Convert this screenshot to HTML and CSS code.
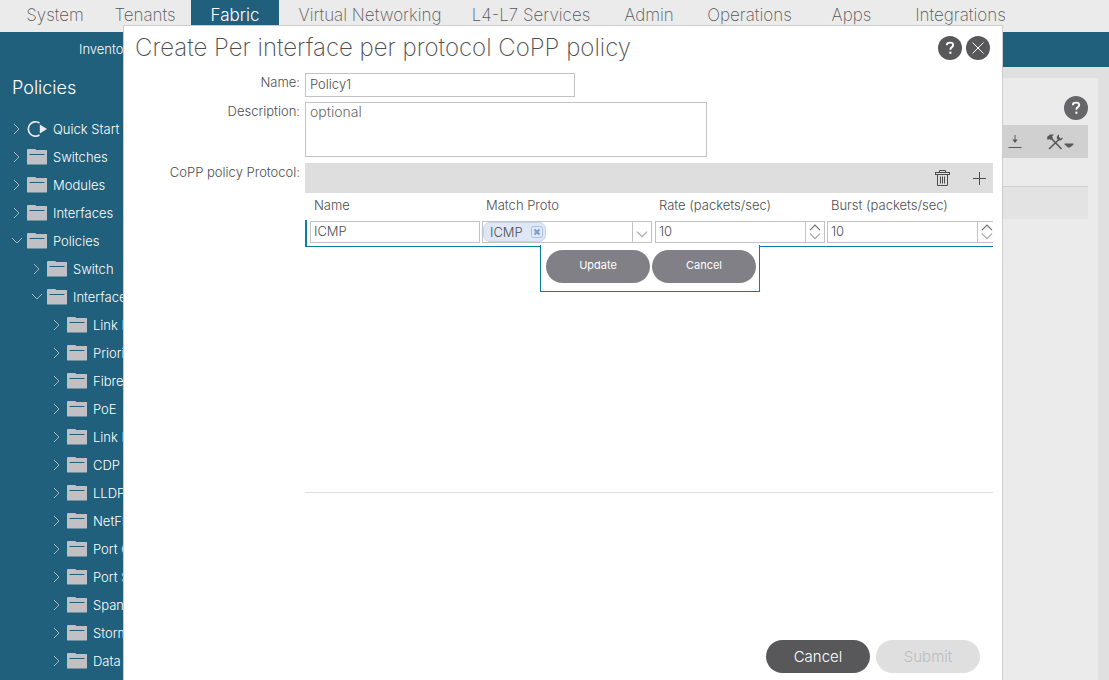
FILE: index.html
```html
<!DOCTYPE html>
<html lang="en">
<head>
    <meta charset="UTF-8">
    <meta name="viewport" content="width=device-width, initial-scale=1.0">
    <title>Create Per interface per protocol CoPP policy</title>
    <link rel="stylesheet" href="styles.css">
</head>
<body>
    <svg width="0" height="0" class="sprite" aria-hidden="true">
        <symbol id="right" viewBox="0 0 10 12"><path d="M2 1l5 5-5 5" fill="none" stroke="#a3b5be" stroke-width="1"/></symbol>
        <symbol id="down" viewBox="0 0 12 12"><path d="M1 3l5 5 5-5" fill="none" stroke="#a3b5be" stroke-width="1"/></symbol>
        <symbol id="folder" viewBox="0 0 20 16"><path d="M0 1q0-1 1-1h7q1 0 1 1h11v14q0 .6-.6.6H.6Q0 15.600 0 15z" fill="#c1c1c5"/><path d="M3 5.500h14" stroke="#21607c" stroke-width="1.200" stroke-linecap="round"/></symbol>
        <symbol id="start" viewBox="0 0 20 16"><path d="M12.500 2A7.200 7.200 0 1 0 12.500 14" fill="none" stroke="#ececec" stroke-width="1.600"/><path d="M12.800 3.500v9L20 8z" fill="#ececec"/></symbol>
        <symbol id="help" viewBox="0 0 24 24"><circle cx="12" cy="12" r="12" fill="#58585b"/><path d="M9 9.300V8.200Q9.200 6.600 12.200 6.600 15.200 6.600 15.200 9q0 1.500-1.600 2.400-1.200.7-1.200 2.300" fill="none" stroke="#fff" stroke-width="1.900"/><path d="M11.400 15.600h2v2.200h-2z" fill="#fff"/></symbol>
        <symbol id="close" viewBox="0 0 24 24"><circle cx="12" cy="12" r="12" fill="#58585b"/><path d="M6.500 6.500l11 11M17.500 6.500l-11 11" stroke="#fff" stroke-width="1"/></symbol>
        <symbol id="v" viewBox="0 0 12 7"><path d="M1 .7l5 5 5-5" fill="none" stroke="currentColor" stroke-width="1.200"/></symbol>
        <symbol id="up" viewBox="0 0 12 7"><path d="M1 6.200l5-5 5 5" fill="none" stroke="currentColor" stroke-width="1.200"/></symbol>
    </svg>

    <nav class="topnav">
        <a href="#">System</a>
        <a href="#">Tenants</a>
        <a href="#" class="active">Fabric</a>
        <a href="#">Virtual Networking</a>
        <a href="#">L4-L7 Services</a>
        <a href="#">Admin</a>
        <a href="#">Operations</a>
        <a href="#">Apps</a>
        <a href="#">Integrations</a>
    </nav>
    <div class="subnav"><a href="#">Inventory</a></div>

    <div class="main">
        <aside class="sidebar">
            <h2>Policies</h2>
            <ul class="tree">
                <li><svg class="arrow"><use href="#right"/></svg><svg class="icon"><use href="#start"/></svg><a href="#">Quick Start</a></li>
                <li><svg class="arrow"><use href="#right"/></svg><svg class="icon"><use href="#folder"/></svg><a href="#">Switches</a></li>
                <li><svg class="arrow"><use href="#right"/></svg><svg class="icon"><use href="#folder"/></svg><a href="#">Modules</a></li>
                <li><svg class="arrow"><use href="#right"/></svg><svg class="icon"><use href="#folder"/></svg><a href="#">Interfaces</a></li>
                <li><svg class="arrow"><use href="#down"/></svg><svg class="icon"><use href="#folder"/></svg><a href="#">Policies</a></li>
                <li class="level-2"><svg class="arrow"><use href="#right"/></svg><svg class="icon"><use href="#folder"/></svg><a href="#">Switch</a></li>
                <li class="level-2"><svg class="arrow"><use href="#down"/></svg><svg class="icon"><use href="#folder"/></svg><a href="#">Interface</a></li>
                <li class="level-3"><svg class="arrow"><use href="#right"/></svg><svg class="icon"><use href="#folder"/></svg><a href="#">Link Level</a></li>
                <li class="level-3"><svg class="arrow"><use href="#right"/></svg><svg class="icon"><use href="#folder"/></svg><a href="#">Priority Flow Control</a></li>
                <li class="level-3"><svg class="arrow"><use href="#right"/></svg><svg class="icon"><use href="#folder"/></svg><a href="#">Fibre Channel Interface</a></li>
                <li class="level-3"><svg class="arrow"><use href="#right"/></svg><svg class="icon"><use href="#folder"/></svg><a href="#">PoE</a></li>
                <li class="level-3"><svg class="arrow"><use href="#right"/></svg><svg class="icon"><use href="#folder"/></svg><a href="#">Link Flap</a></li>
                <li class="level-3"><svg class="arrow"><use href="#right"/></svg><svg class="icon"><use href="#folder"/></svg><a href="#">CDP Interface</a></li>
                <li class="level-3"><svg class="arrow"><use href="#right"/></svg><svg class="icon"><use href="#folder"/></svg><a href="#">LLDP Interface</a></li>
                <li class="level-3"><svg class="arrow"><use href="#right"/></svg><svg class="icon"><use href="#folder"/></svg><a href="#">NetFlow</a></li>
                <li class="level-3"><svg class="arrow"><use href="#right"/></svg><svg class="icon"><use href="#folder"/></svg><a href="#">Port Channel</a></li>
                <li class="level-3"><svg class="arrow"><use href="#right"/></svg><svg class="icon"><use href="#folder"/></svg><a href="#">Port Security</a></li>
                <li class="level-3"><svg class="arrow"><use href="#right"/></svg><svg class="icon"><use href="#folder"/></svg><a href="#">Spanning Tree</a></li>
                <li class="level-3"><svg class="arrow"><use href="#right"/></svg><svg class="icon"><use href="#folder"/></svg><a href="#">Storm Control</a></li>
                <li class="level-3"><svg class="arrow"><use href="#right"/></svg><svg class="icon"><use href="#folder"/></svg><a href="#">Data Plane</a></li>
            </ul>
        </aside>
        <section class="workspace">
            <div class="panel">
                <div class="panel-head"><button class="round page-help" aria-label="Help"><svg><use href="#help"/></svg></button></div>
                <div class="panel-tools">
                    <button aria-label="Download"><svg width="14" height="16" viewBox="0 0 14 16"><path d="M7 1v7M.5 13.500h13" stroke="#58585b"/><path d="M4.300 5.500h5.400L7 9z" fill="#58585b"/></svg></button>
                    <button aria-label="Tools"><svg width="28" height="18" viewBox="0 0 28 18"><path d="M5 5l10.500 11M14 5.500L3 16" stroke="#58585b" stroke-width="1.600"/><path d="M1 4l3-2.500h4L6 3.500l1 1.500-2.500 2-1-1L1.500 7z" fill="#58585b"/><path d="M13 1.500Q10 3 11 6l2 1.500q3 .5 4-3l-2.500 1-1.500-1.500z" fill="#58585b"/><path d="M18.500 10.500h9v1L24 14.500h-2l-3.500-3z" fill="#58585b"/></svg></button>
                </div>
                <div class="panel-row"></div>
            </div>
        </section>
    </div>

    <div class="dialog" role="dialog" aria-labelledby="dialog-title">
        <div class="dialog-head">
            <h1 id="dialog-title">Create Per interface per protocol CoPP policy</h1>
            <button class="round" aria-label="Help"><svg><use href="#help"/></svg></button>
            <button class="round" aria-label="Close"><svg><use href="#close"/></svg></button>
        </div>

        <form class="form">
            <label for="name">Name:</label>
            <input type="text" id="name" class="name-field" value="Policy1">
            <label for="description">Description:</label>
            <textarea id="description" placeholder="optional"></textarea>
            <span class="label">CoPP policy Protocol:</span>
            <div class="protocols">
                <div class="grid-tools">
                    <button type="button" aria-label="Delete"><svg width="15" height="16" viewBox="0 0 15 16"><path d="M0 2.500h15M0 4.500h15M.5 2v3M14.500 2v3M4.500 2V.5h6V2M2.500 4.500v11h10v-11M5.500 6.500v7M7.500 6.500v7M9.500 6.500v7" fill="none" stroke="#4d4d50"/></svg></button>
                    <button type="button" aria-label="Add"><svg width="13" height="13" viewBox="0 0 13 13"><path d="M6.500 0v13M0 6.500h13" stroke="#4d4d50"/></svg></button>
                </div>
                <table>
                    <thead>
                        <tr><th>Name</th><th class="match">Match Proto</th><th>Rate (packets/sec)</th><th>Burst (packets/sec)</th></tr>
                    </thead>
                    <tbody>
                        <tr>
                            <td><div class="cell"><input type="text" aria-label="Name" value="ICMP"></div></td>
                            <td>
                                <div class="cell">
                                    <span class="tag">ICMP<button type="button" aria-label="Remove ICMP"><svg width="12" height="12" viewBox="0 0 12 12"><rect x=".5" y=".5" width="11" height="11" rx="2" fill="#dfe8f6" stroke="#a9c3e6"/><path d="M3.500 3.500l5 5M8.500 3.500l-5 5" stroke="#7a9ccb" stroke-width="2"/></svg></button></span>
                                    <input type="text" aria-label="Match Proto">
                                    <button type="button" class="trigger" aria-label="Open list"><svg><use href="#v"/></svg></button>
                                </div>
                            </td>
                            <td>
                                <div class="cell">
                                    <input type="text" aria-label="Rate" value="10">
                                    <span class="spinner"><button type="button" aria-label="Increase rate"><svg><use href="#up"/></svg></button><button type="button" aria-label="Decrease rate"><svg><use href="#v"/></svg></button></span>
                                </div>
                            </td>
                            <td>
                                <div class="cell">
                                    <input type="text" aria-label="Burst" value="10">
                                    <span class="spinner"><button type="button" aria-label="Increase burst"><svg><use href="#up"/></svg></button><button type="button" aria-label="Decrease burst"><svg><use href="#v"/></svg></button></span>
                                </div>
                            </td>
                        </tr>
                    </tbody>
                </table>
                <div class="row-actions">
                    <button type="button">Update</button>
                    <button type="button">Cancel</button>
                </div>
            </div>
        </form>

        <div class="dialog-foot">
            <button type="button" class="cancel">Cancel</button>
            <button type="button" class="submit" disabled>Submit</button>
        </div>
    </div>
</body>
</html>
```

FILE: styles.css
```css
* {
    box-sizing: border-box;
}
body {
    margin: 0;
    height: 100vh;
    display: flex;
    flex-direction: column;
    overflow: hidden;
    font-family: Inter, "Liberation Sans", sans-serif;
    font-size: 13px;
    font-weight: 300;
    color: #4d4d50;
    background: #e0e0e0;
}
h1, h2, ul {
    margin: 0;
    padding: 0;
    font-weight: 300;
}
a {
    color: inherit;
    text-decoration: none;
}
button, input, textarea {
    font: inherit;
    color: inherit;
}
button {
    padding: 0;
    border: 0;
    background: none;
}
button svg {
    display: block;
}
.sprite {
    position: absolute;
}

/* Navigation */
.topnav {
    display: grid;
    grid-template-columns: 90px 90px 90px 180px 142px 94px 107px 97px 121px;
    flex: none;
    height: 32px;
    padding-left: 10px;
    background: #ebebeb;
    color: #58585b;
    font-size: 17px;
    font-weight: 200;
    line-height: 31px;
    text-align: center;
    white-space: nowrap;
}
.topnav .active {
    margin: 0 1px;
    background: #21607c;
    color: #fff;
    font-weight: 300;
}
.subnav {
    flex: none;
    height: 35px;
    padding-left: 79px;
    background: #21607c;
    color: #fff;
    line-height: 34px;
}
.main {
    display: flex;
    flex: 1;
    min-height: 0;
}
.sidebar {
    width: 124px;
    flex: none;
    overflow: hidden;
    padding-top: 8px;
    background: #21607c;
    color: #fff;
    white-space: nowrap;
}
.sidebar h2 {
    padding-left: 12px;
    margin-bottom: 14px;
    font-size: 18px;
    line-height: 26px;
}
.tree {
    list-style: none;
}
.tree li {
    display: flex;
    align-items: center;
    height: 28px;
    padding-left: 11px;
}
.tree .level-2 {
    padding-left: 31px;
}
.tree .level-3 {
    padding-left: 51px;
}
.arrow {
    width: 12px;
    height: 12px;
    flex: none;
    margin-right: 4px;
}
.icon {
    width: 20px;
    height: 16px;
    flex: none;
    margin-right: 6px;
}

/* Page behind the dialog */
.workspace {
    flex: 1;
    padding: 11px 11px 0 0;
}
.panel {
    height: 100%;
    padding-right: 10px;
    background: #ebebeb;
}
.panel-head {
    display: flex;
    justify-content: flex-end;
    height: 47px;
    padding-top: 18px;
}
.page-help {
    opacity: 0.9;
}
.panel-tools {
    display: flex;
    justify-content: flex-end;
    align-items: center;
    gap: 24px;
    height: 33px;
    padding-right: 14px;
    background: #d0d0d0;
}
.panel-row {
    height: 33px;
    margin-top: 28px;
    border-top: 1px solid #cfcfcf;
    background: #e3e3e3;
}
.round, .round svg {
    width: 24px;
    height: 24px;
}
.round {
    flex: none;
}

/* Dialog */
.dialog {
    position: absolute;
    top: 25px;
    right: 106px;
    bottom: 0;
    left: 123px;
    display: flex;
    flex-direction: column;
    border: 1px solid #ccc;
    border-bottom: 0;
    background: #fff;
}
.dialog-head {
    display: flex;
    align-items: center;
    gap: 4px;
    height: 43px;
    padding: 0 12px 0 11px;
}
.dialog-head h1 {
    flex: 1;
    font-size: 24px;
    font-weight: 200;
    line-height: 43px;
    white-space: nowrap;
}
.form {
    display: grid;
    grid-template-columns: 176px minmax(0, 1fr);
    gap: 5px;
    padding: 4px 9px 0 0;
}
.form label, .label {
    text-align: right;
    line-height: 19px;
}
.form .name-field, .form textarea {
    border: 1px solid #c2c2c6;
    border-radius: 0;
    padding: 0 4px 2px;
    line-height: 18px;
}
.form .name-field {
    width: 270px;
    height: 24px;
}
.form textarea {
    width: 402px;
    height: 55px;
    margin-bottom: 1px;
    resize: none;
    font-size: 14px;
}
textarea::placeholder {
    color: #68686b;
}
.protocols {
    position: relative;
    height: 330px;
    border-bottom: 1px solid #e0e0e0;
    overflow: hidden;
}
.grid-tools {
    display: flex;
    align-items: center;
    justify-content: flex-end;
    gap: 23px;
    height: 30px;
    padding-right: 7px;
    background: #dedede;
}
table {
    width: calc(100% + 1px);
    table-layout: fixed;
    border-collapse: separate;
    border-spacing: 0;
}
th {
    height: 27px;
    padding: 0 0 4px 9px;
    font-weight: 300;
    text-align: left;
}
th.match {
    width: 173px;
}
td {
    height: 27px;
    padding: 1px 0 0 5px;
    border-bottom: 1px solid #0d7ca8;
    vertical-align: top;
}
td:first-child {
    padding-left: 3px;
    border-left: 2px solid #0d7ca8;
}
.cell {
    display: flex;
    width: 170px;
    height: 22px;
    border: 1px solid #c2c2c6;
    background: #fff;
}
.cell input {
    flex: 1;
    min-width: 0;
    padding: 0 3px 2px;
    border: 0;
    background: none;
}
.tag {
    display: flex;
    align-items: center;
    gap: 8px;
    padding: 0 2px 0 6px;
    border: 1px solid #c5d5ee;
    border-radius: 7px;
    background: #dfe7f7;
}
.trigger, .spinner {
    display: flex;
    flex-direction: column;
    align-items: center;
    justify-content: center;
    gap: 2px;
    width: 19px;
    border-left: 1px solid #c2c2c6;
    color: #a5a5a8;
}
.trigger {
    padding-top: 4px;
}
.spinner button:first-child {
    color: #707073;
}
.trigger svg, .spinner svg {
    width: 12px;
    height: 7px;
}
.row-actions {
    position: absolute;
    top: 82px;
    left: 235px;
    display: flex;
    gap: 2px;
    padding: 5px 3px 8px 5px;
    border: 1px solid #0d7ca8;
    border-top: 0;
    background: #fff;
}
.row-actions button {
    width: 104px;
    height: 33px;
    padding-bottom: 3px;
    border-radius: 17px;
    background: #808086;
    color: #fff;
    font-size: 11px;
    font-weight: 400;
}
.dialog-foot {
    display: flex;
    justify-content: flex-end;
    gap: 6px;
    margin-top: auto;
    padding: 0 22px 7px;
}
.dialog-foot button {
    width: 104px;
    height: 33px;
    border-radius: 17px;
    font-size: 15px;
}
.cancel {
    background: #58585b;
    color: #fff;
}
.submit {
    background: #dfdfdf;
    color: #bcbcbf;
}
```
